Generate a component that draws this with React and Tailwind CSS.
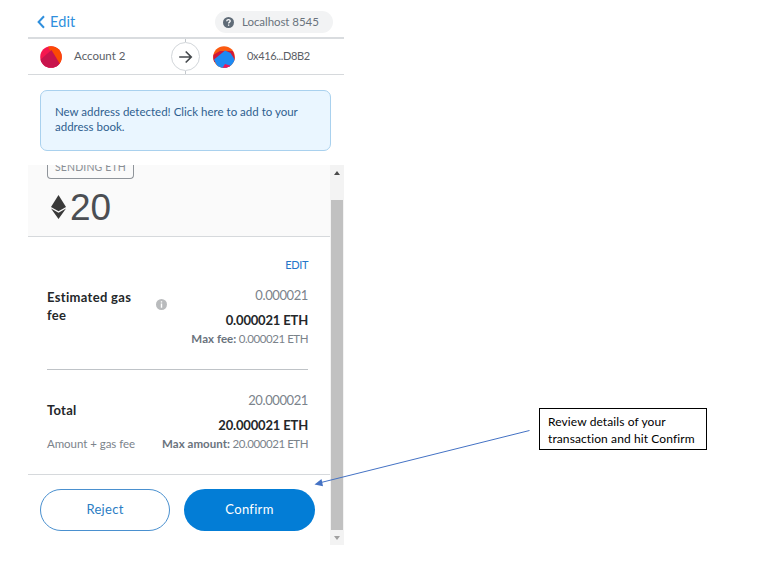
import React from "react";

function BackChevron() {
  return (
    <svg width="8" height="14" viewBox="0 0 8 14" fill="none" stroke="#2f8fdd" strokeWidth="2">
      <path d="M7 1.2 1.6 7 7 12.8" />
    </svg>
  );
}

function SenderIcon() {
  return (
    <svg width="22" height="22" viewBox="0 0 22 22">
      <clipPath id="sender"><circle cx="11" cy="11" r="10.8" /></clipPath>
      <g clipPath="url(#sender)">
        <rect width="22" height="22" fill="#f5174f" />
        <path d="M8 0H22V22L9 3Z" fill="#fb4a04" />
        <path d="M11.500 4 20 18V22H2L0 14Z" fill="#c8144d" />
      </g>
    </svg>
  );
}

function RecipientIcon() {
  return (
    <svg width="22" height="22" viewBox="0 0 22 22">
      <clipPath id="recipient"><circle cx="11" cy="11" r="10.8" /></clipPath>
      <g clipPath="url(#recipient)">
        <rect width="22" height="22" fill="#fb5a10" />
        <path d="M0 9 7 5 20 5 22 12V16H0Z" fill="#d0183a" />
        <path d="M12 4.500 17.500 7 22 14V22H5L1 13.500Z" fill="#1e8af2" />
        <path d="M12 18 17 19.500V22H9.500Z" fill="#f0145a" />
      </g>
    </svg>
  );
}

function Header() {
  return (
    <header className="flex h-[39px] items-start justify-between border-b-2 border-[#d9dcdf] pr-[11px] pl-[9px]">
      <div className="mt-[14px] flex h-4 items-center gap-[5px] text-[14.5px] leading-4 tracking-[0.1px] text-[#2f8fdd]">
        <BackChevron />
        <span>Edit</span>
      </div>
      <div className="mt-[11px] flex h-[22px] w-[118px] items-center gap-2 rounded-full bg-[#f2f3f4] pl-2 text-[11.5px] text-[#6a737d]">
        <svg width="11" height="11" viewBox="0 0 11 11">
          <circle cx="5.5" cy="5.5" r="5.5" fill="#5f6b77" />
          <path d="M3.7 4.2C3.8 2 7.3 2.1 7.2 4.1 7.1 5.3 5.6 5.2 5.6 6.5M5.6 7.5V8.8" fill="none" stroke="#fff" strokeWidth="1.3" />
        </svg>
        <span className="pb-px tracking-[-0.06px] whitespace-nowrap">Localhost 8545</span>
      </div>
    </header>
  );
}

function Transfer() {
  return (
    <div className="flex h-9 border-b border-[#d6d9dc] text-[11.5px] text-[#5b6066]">
      <div className="flex w-[142px] items-center gap-3 pl-3">
        <SenderIcon />
        <span className="pb-px">Account 2</span>
      </div>
      <div className="flex w-[31px] flex-col items-center">
        <div className="h-[3px] w-px bg-[#c3c8cc]" />
        <div className="flex h-[29px] w-[29px] items-center justify-center rounded-full border border-[#d2d6da]">
          <svg width="14" height="14" viewBox="0 0 14 14" fill="none" stroke="#45494d" strokeWidth="1.7">
            <path d="M.2 7H12M6.7 1.5 12.2 7 6.7 12.5" />
          </svg>
        </div>
        <div className="h-[3px] w-px bg-[#c3c8cc]" />
      </div>
      <div className="flex items-center gap-3 pl-3">
        <RecipientIcon />
        <span className="pb-px text-[11px] tracking-[-0.35px]">0x416...D8B2</span>
      </div>
    </div>
  );
}

function Amount() {
  return (
    <div className="h-[72px] border-b border-[#d6d9dc] bg-[#fafafa] pl-[19px]">
      <div className="flex h-[14px] w-[87px] items-end justify-center overflow-hidden rounded-b-[4px] border border-t-0 border-[#8f949a] pb-[4px] text-[10.5px] leading-[13px] tracking-[0.15px] text-[#8a8f95]">
        <span className="whitespace-nowrap">SENDING ETH</span>
      </div>
      <div className="mt-2 flex h-10 items-center gap-1 pl-1">
        <svg width="15" height="24" viewBox="0 0 15 24" fill="#393939">
          <path d="M7.5 0 15 12 7.5 16.2 0 12Z" />
          <path d="M0 13.5 7.5 17.8 15 13.5 7.5 24Z" />
        </svg>
        <span className="pt-[2px] font-['Liberation_Sans',sans-serif] text-[37px] leading-10 text-[#4b4e53]">20</span>
      </div>
    </div>
  );
}

function Fees() {
  return (
    <div className="pr-[22px] pl-[19px]">
      <div className="flex h-[133px] flex-col border-b border-[#bfc3c7] pt-[20px]">
        <div className="self-end text-[11px] leading-4 tracking-[-0.4px] text-[#2376c9]">EDIT</div>
        <div className="mt-[15px] flex justify-between">
          <div className="flex h-9 w-[120px] items-center justify-between">
            <div className="w-[92px] text-[13px] leading-[18px] font-bold tracking-[0.32px] text-[#24272a]">Estimated gas fee</div>
            <svg className="mb-1" width="11" height="11" viewBox="0 0 11 11">
              <circle cx="5.5" cy="5.5" r="5.5" fill="#b9bbbd" />
              <path d="M5.5 2.2V3.6M5.5 4.6V8.7" stroke="#fff" strokeWidth="1.4" />
            </svg>
          </div>
          <Values plain="0.000021" bold="0.000021 ETH" label="Max fee:" max="0.000021 ETH" />
        </div>
      </div>
      <div className="flex h-[104px] justify-between pt-[23px]">
        <div>
          <div className="mt-[8px] text-[13px] leading-[18px] font-bold tracking-[0.25px] text-[#24272a]">Total</div>
          <div className="mt-[17px] text-[11.5px] leading-4 tracking-[-0.05px] whitespace-nowrap text-[#7b838b]">Amount + gas fee</div>
        </div>
        <Values plain="20.000021" bold="20.000021 ETH" label="Max amount:" max="20.000021 ETH" />
      </div>
    </div>
  );
}

function Values({ plain, bold, label, max }) {
  return (
    <div className="-mt-[3px] flex flex-col items-end whitespace-nowrap">
      <div className="text-[13px] leading-5 tracking-[-0.4px] text-[#7b838b]">{plain}</div>
      <div className="mt-[5px] text-[13px] leading-5 font-bold tracking-[-0.17px] text-[#24272a]">{bold}</div>
      <div className="mt-px text-[11.5px] leading-4 tracking-[-0.45px] text-[#7b838b]">
        <b className="tracking-[0.05px] text-[#6a737d]">{label}</b> {max}
      </div>
    </div>
  );
}

function Scrollbar() {
  return (
    <div className="flex w-[14px] flex-col items-center bg-[#f3f3f3]">
      <div className="flex h-[35px] items-start justify-center pt-[6px]">
        <svg width="6" height="4" viewBox="0 0 6 4"><path d="M3 0 6 4H0Z" fill="#4a4a4a" /></svg>
      </div>
      <div className="h-[330px] w-3 bg-[#c1c1c1]" />
      <div className="flex h-[15px] items-center justify-center">
        <svg width="6" height="4" viewBox="0 0 6 4"><path d="M0 0H6L3 4Z" fill="#a0a0a0" /></svg>
      </div>
    </div>
  );
}

export default function App() {
  return (
    <div className="relative h-[588px] w-[777px] overflow-hidden bg-white pl-7 font-['Lato',sans-serif]">
      <main className="flex w-[316px] flex-col">
        <Header />
        <Transfer />
        <div className="mt-[15px] ml-3 h-[61px] w-[291px] rounded-[7px] border border-[#a9d1ee] bg-[#eaf6ff] px-[14px] py-[13px] text-[11.5px] leading-[15px] text-[#2f5f8f]">
          New address detected! Click here to add to your address book.
        </div>
        <div className="mt-[14px] flex h-[380px]">
          <div className="w-[302px]">
            <Amount />
            <Fees />
            <footer className="flex gap-[14px] border-t border-[#d6d9dc] pt-[14px] pl-3 text-[13px] tracking-[0.3px]">
              <button className="h-[42px] w-[130px] shrink-0 rounded-full border border-[#4a90cf] text-[#2b7dc4]">Reject</button>
              <button className="h-[42px] w-[131px] shrink-0 rounded-full bg-[#037dd6] text-white">Confirm</button>
            </footer>
          </div>
          <Scrollbar />
        </div>
      </main>
      <svg className="absolute top-[420px] left-[310px]" width="225" height="72" viewBox="0 0 225 72">
        <path d="M219.500 10.500 11 62.500" stroke="#4472c4" strokeWidth="1" />
        <path d="M4.500 64.500 11.500 59 13 66.200Z" fill="#4472c4" />
      </svg>
      <div className="absolute top-[408px] left-[539px] h-[42px] w-[168px] border border-black bg-white pt-[4px] pl-2 text-[12px] leading-[17px] tracking-[0.1px] text-black">
        Review details of your<br />transaction and hit Confirm
      </div>
    </div>
  );
}
